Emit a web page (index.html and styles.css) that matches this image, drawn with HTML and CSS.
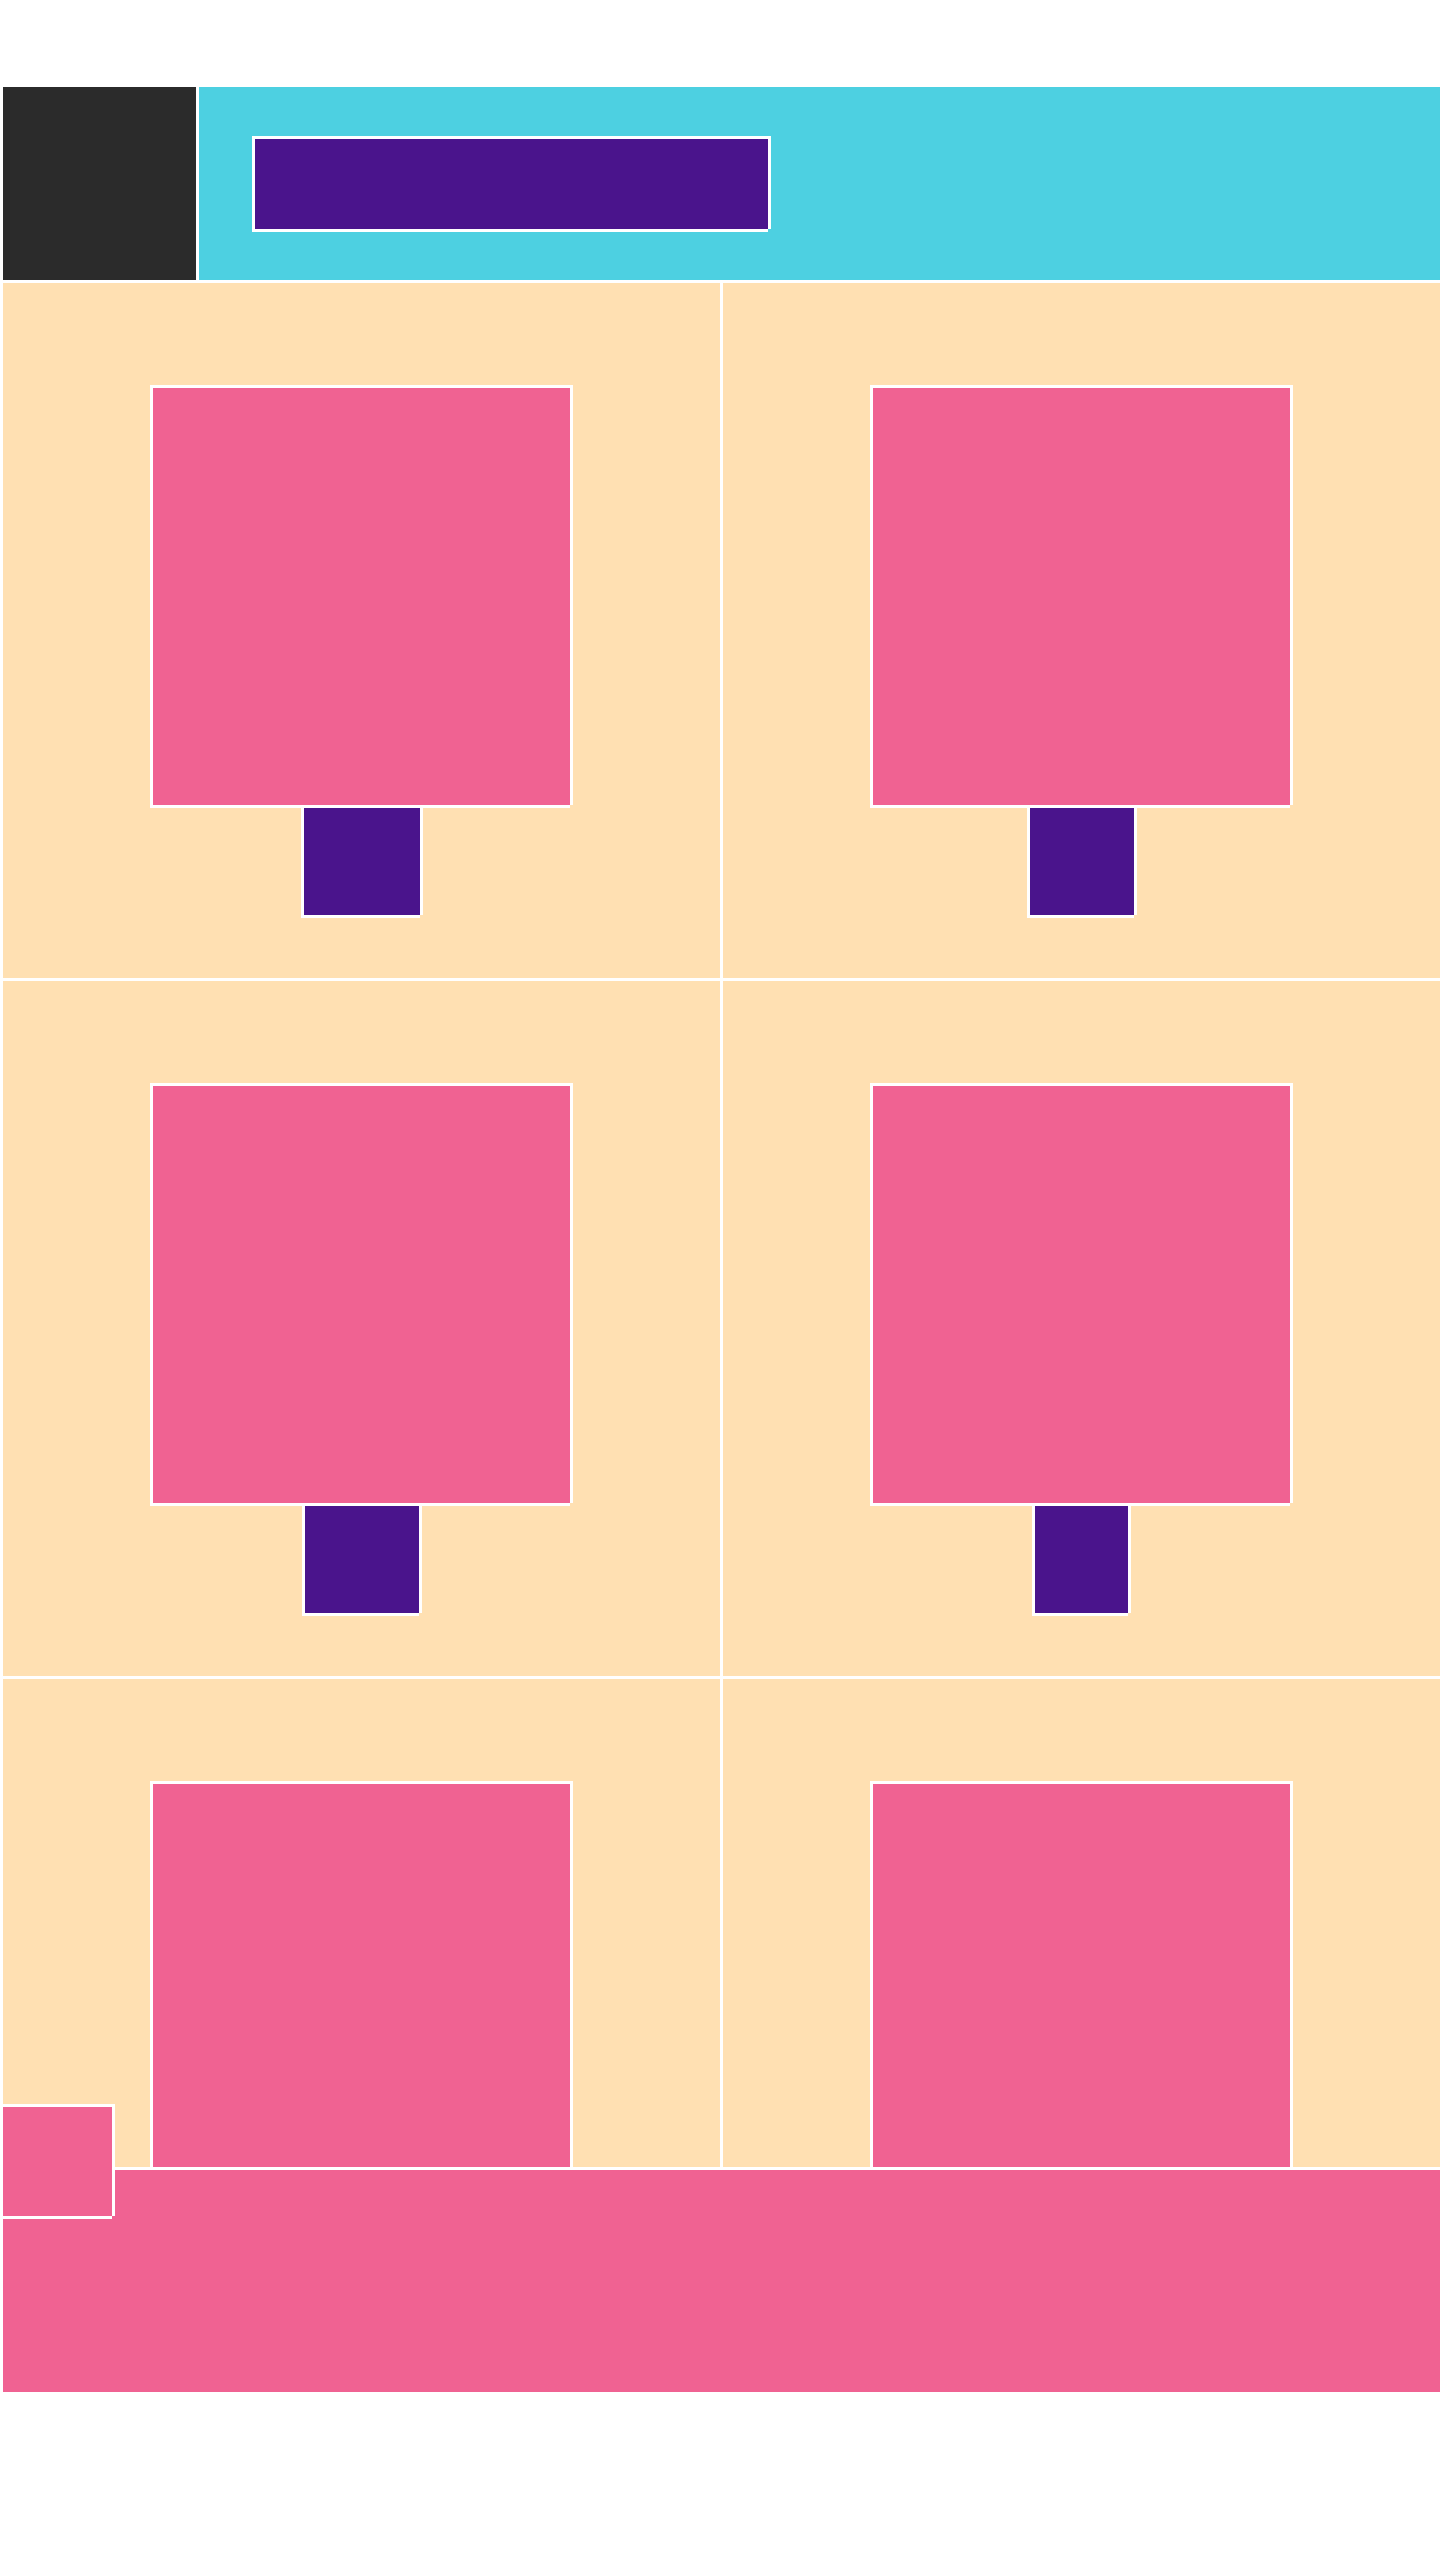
FILE: index.html
```html
<!DOCTYPE html>
<html lang="en">
<head>
<meta charset="utf-8">
<title>Layout</title>
<link rel="stylesheet" href="styles.css">
</head>
<body>
<div class="page">
  <header class="header">
    <div class="brand"></div>
    <div class="topbar">
      <div class="search framed"></div>
    </div>
  </header>
  <main class="grid">
    <section class="cell">
      <div class="media framed"></div>
      <div class="tag framed" style="width:116px"></div>
    </section>
    <section class="cell">
      <div class="media framed"></div>
      <div class="tag framed" style="width:104px"></div>
    </section>
    <section class="cell">
      <div class="media framed"></div>
      <div class="tag framed" style="width:114px"></div>
    </section>
    <section class="cell">
      <div class="media framed"></div>
      <div class="tag framed" style="width:93px"></div>
    </section>
    <section class="cell">
      <div class="media framed"></div>
      <div class="tag framed" style="width:110px"></div>
    </section>
    <section class="cell">
      <div class="media framed"></div>
      <div class="tag framed" style="width:110px"></div>
    </section>
  </main>
  <footer class="footer">
    <div class="badge framed"></div>
  </footer>
</div>
</body>
</html>
```

FILE: styles.css
```css
html, body {
  margin: 0;
  padding: 0;
  background: #ffffff;
}

.page {
  width: 1437px;
  padding: 87px 0 0 3px;
  font-family: "Liberation Sans", Arial, sans-serif;
}

.framed {
  box-shadow:
    -3px -3px 0 #ffffff,
    3px -3px 0 #ffffff,
    -3px 3px 0 #ffffff,
    0 3px 0 #ffffff,
    3px 0 0 #ffffff;
}

.header {
  display: flex;
  gap: 3px;
  height: 193px;
}

.brand {
  width: 193px;
  background: #2b2b2b;
}

.topbar {
  flex: 1;
  background: #4dd0e1;
  display: flex;
  align-items: center;
  padding-left: 56px;
}

.search {
  width: 513px;
  height: 90px;
  background: #4a148c;
}

.grid {
  margin-top: 3px;
  display: grid;
  grid-template-columns: 717px 717px;
  grid-template-rows: 695px 695px 488px;
  gap: 3px;
}

.cell {
  background: #ffe0b2;
  display: flex;
  flex-direction: column;
  align-items: center;
  padding-top: 105px;
  box-sizing: border-box;
  overflow: hidden;
}

.media {
  width: 417px;
  height: 417px;
  flex: none;
  background: #f06292;
}

.tag {
  margin-top: 3px;
  height: 107px;
  flex: none;
  background: #4a148c;
}

.footer {
  position: relative;
  margin-top: 3px;
  height: 222px;
  background: #f06292;
}

.badge {
  position: absolute;
  left: 0;
  top: -63px;
  width: 109px;
  height: 109px;
  background: #f06292;
}
```
